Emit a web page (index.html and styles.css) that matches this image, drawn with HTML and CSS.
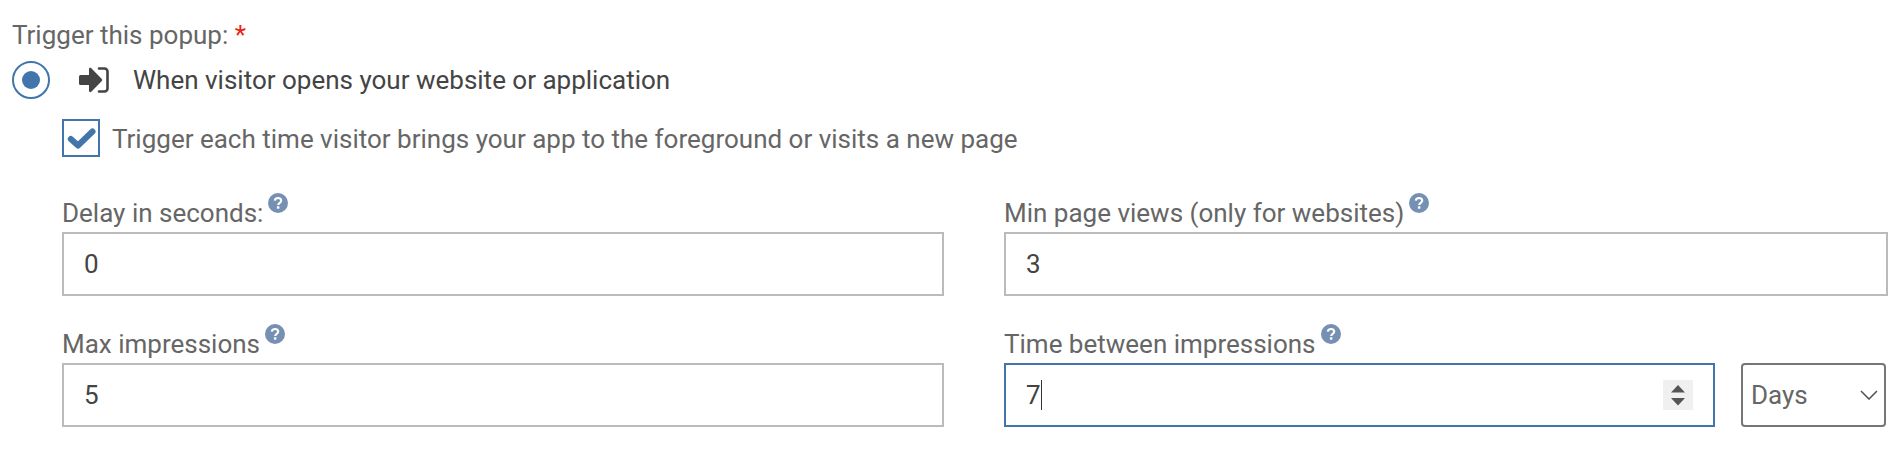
FILE: index.html
```html
<!DOCTYPE html>
<html>
  <head>
    <link rel="stylesheet" href="styles.css">
  </head>
  <body>
    <section class="trigger">
      <div class="trigger-label">Trigger this popup: <span class="required">*</span></div>

      <div class="radio-row">
        <span class="radio"><span class="radio-dot"></span></span>
        <svg class="enter-icon" viewBox="0 0 30 26">
          <path d="M0 9.500a1.500 1.500 0 0 1 1.500-1.500H10V2.200c0-1.200 1.400-1.800 2.300-1L22.600 11.700a1.800 1.800 0 0 1 0 2.600L12.300 24.800c-.9.800-2.300.2-2.300-1V18H1.500A1.500 1.500 0 0 1 0 16.500z" fill="#444"/>
          <path d="M20 1.500h5.500a3 3 0 0 1 3 3v17a3 3 0 0 1-3 3H20" fill="none" stroke="#444" stroke-width="2.600" stroke-linecap="round"/>
        </svg>
        <span class="radio-text">When visitor opens your website or application</span>
      </div>

      <div class="check-row">
        <span class="checkbox">
          <svg viewBox="0 0 28 24">
            <path d="M3.800 13l7.200 6.500L25.500 5.500" fill="none" stroke="#4175ab" stroke-width="6" stroke-linecap="round" stroke-linejoin="round"/>
          </svg>
        </span>
        <span class="check-text">Trigger each time visitor brings your app to the foreground or visits a new page</span>
      </div>

      <div class="fields">
        <div class="group">
          <div class="group-label">Delay in seconds:<svg class="help" viewBox="0 0 20 20"><use href="#help-icon"/></svg></div>
          <div class="input">0</div>
        </div>
        <div class="group">
          <div class="group-label">Min page views (only for websites)<svg class="help" viewBox="0 0 20 20"><use href="#help-icon"/></svg></div>
          <div class="input">3</div>
        </div>
        <div class="group">
          <div class="group-label">Max impressions<svg class="help" viewBox="0 0 20 20"><use href="#help-icon"/></svg></div>
          <div class="input">5</div>
        </div>
        <div class="group">
          <div class="group-label">Time between impressions<svg class="help" viewBox="0 0 20 20"><use href="#help-icon"/></svg></div>
          <div class="input-row">
            <div class="input input-focus">
              <span class="value">7</span><span class="caret"></span>
              <span class="spinner">
                <svg viewBox="0 0 30 30">
                  <path d="M15 5l7 7.500H8zM8 18h14l-7 7.500z" fill="#555"/>
                </svg>
              </span>
            </div>
            <div class="select">
              <span>Days</span>
              <svg class="chevron" viewBox="0 0 18 10">
                <path d="M1 1l8 8 8-8" fill="none" stroke="#555" stroke-width="1.600"/>
              </svg>
            </div>
          </div>
        </div>
      </div>
    </section>

    <svg class="defs" width="0" height="0">
      <symbol id="help-icon" viewBox="0 0 20 20">
        <circle cx="10" cy="10" r="10" fill="#7590b3"/>
        <path d="M6.800 7.600c.2-1.700 1.500-2.600 3.200-2.600 1.800 0 3.200 1 3.200 2.600 0 2.300-3 2.200-3 4.400" fill="none" stroke="#fff" stroke-width="2.200"/>
        <rect x="8.900" y="13.200" width="2.500" height="2.500" rx=".4" fill="#fff"/>
      </symbol>
    </svg>
  </body>
</html>
```

FILE: styles.css
```css
body {
  margin: 0;
  background-color: #ffffff;
  font-family: Roboto, "Liberation Sans", sans-serif;
  font-size: 26px;
  color: #666666;
}

.trigger {
  height: 450px;
  padding: 21px 16px 0 12px;
  box-sizing: border-box;
  overflow: hidden;
}

.trigger-label {
  height: 28px;
  line-height: 28px;
}

.required {
  color: #ee2211;
}

.radio-row {
  display: flex;
  align-items: center;
  height: 38px;
  margin-top: 12px;
}

.radio {
  display: flex;
  align-items: center;
  justify-content: center;
  width: 38px;
  height: 38px;
  box-sizing: border-box;
  border: 2px solid #4175ab;
  border-radius: 50%;
}

.radio-dot {
  width: 18px;
  height: 18px;
  border-radius: 50%;
  background-color: #4175ab;
}

.enter-icon {
  width: 30px;
  height: 26px;
  margin-left: 29px;
}

.radio-text {
  margin-left: 24px;
  color: #444444;
}

.check-row {
  display: flex;
  align-items: center;
  height: 38px;
  margin-top: 20px;
  margin-left: 50px;
}

.checkbox {
  display: flex;
  align-items: center;
  justify-content: center;
  width: 38px;
  height: 38px;
  box-sizing: border-box;
  border: 2px solid #4175ab;
}

.checkbox svg {
  width: 28px;
  height: 24px;
  overflow: visible;
}

.check-text {
  margin-left: 12px;
  padding-top: 2px;
}

.fields {
  display: grid;
  grid-template-columns: 882px 884px;
  column-gap: 60px;
  row-gap: 27px;
  margin-top: 35px;
  margin-left: 50px;
  margin-right: -1px;
}

.group-label {
  display: flex;
  align-items: flex-start;
  height: 40px;
  line-height: 42px;
}

.help {
  flex: none;
  width: 20px;
  height: 20px;
  margin-left: 5px;
  margin-top: 1px;
}

.input {
  display: flex;
  align-items: center;
  height: 64px;
  box-sizing: border-box;
  padding-left: 20px;
  border: 2px solid #bbbbbb;
  color: #444444;
  line-height: 30px;
}

.input-row {
  display: flex;
  gap: 26px;
}

.input-focus {
  flex: none;
  width: 711px;
  border-color: #4175ab;
}

.caret {
  width: 1.500px;
  height: 30px;
  background-color: #333333;
}

.spinner {
  display: flex;
  width: 30px;
  height: 30px;
  margin-left: auto;
  margin-right: 20px;
  background-color: #f0f0f0;
}

.spinner svg {
  width: 30px;
  height: 30px;
}

.select {
  display: flex;
  align-items: center;
  justify-content: space-between;
  flex: none;
  width: 145px;
  height: 64px;
  box-sizing: border-box;
  padding: 0 6px 0 8px;
  border: 2px solid #767676;
  border-radius: 4px;
}

.chevron {
  width: 18px;
  height: 10px;
}

.defs {
  display: none;
}
```
